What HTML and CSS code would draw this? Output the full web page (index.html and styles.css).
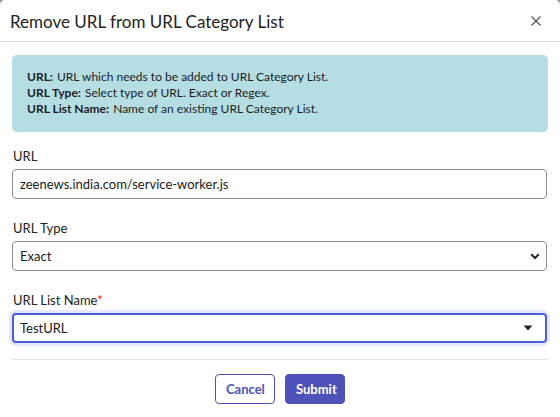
FILE: index.html
```html
<!DOCTYPE html>
<html lang="en">
<head>
<meta charset="utf-8">
<title>Remove URL from URL Category List</title>
<link rel="stylesheet" href="styles.css">
</head>
<body>
<div class="modal">
  <div class="modal-header">
    <h2 class="modal-title">Remove URL from URL Category List</h2>
    <button class="close" type="button" aria-label="Close">
      <svg width="12" height="12" viewBox="0 0 12 12"><path d="M1.5 1.5 L10.5 10.5 M10.5 1.5 L1.5 10.5" stroke="#555" stroke-width="1.3" fill="none"/></svg>
    </button>
  </div>
  <div class="modal-body">
    <div class="info">
      <div><b>URL:</b> URL which needs to be added to URL Category List.</div>
      <div><b>URL Type:</b> Select type of URL. Exact or Regex.</div>
      <div><b>URL List Name:</b> Name of an existing URL Category List.</div>
    </div>
    <div class="field">
      <label class="label">URL</label>
      <input class="control" type="text" value="zeenews.india.com/service-worker.js">
    </div>
    <div class="field">
      <label class="label">URL Type</label>
      <div class="control select">
        <span>Exact</span>
        <svg width="10" height="7" viewBox="0 0 10 7"><path d="M1.2 1.3 L5 5 L8.8 1.3" stroke="#222" stroke-width="2" fill="none"/></svg>
      </div>
    </div>
    <div class="field">
      <label class="label">URL List Name<span class="req">*</span></label>
      <div class="control select focus">
        <span>TestURL</span>
        <svg width="10" height="6" viewBox="0 0 10 6"><path d="M0.5 0.5 L9.5 0.5 L5 5.5 Z" fill="#222"/></svg>
      </div>
    </div>
  </div>
  <div class="modal-footer">
    <button class="btn btn-outline" type="button">Cancel</button>
    <button class="btn btn-primary" type="button">Submit</button>
  </div>
</div>
</body>
</html>
```
FILE: styles.css
```css
html, body {
  margin: 0;
  padding: 0;
  background: #9a9a9a;
}
body {
  font-family: Lato, "Open Sans", sans-serif;
  color: #222;
  width: 560px;
  height: 417px;
  overflow: hidden;
}
.modal {
  background: #fff;
  width: 560px;
  height: 420px;
  border-radius: 5px 5px 0 0;
  box-sizing: border-box;
}
.modal-header {
  display: flex;
  align-items: center;
  justify-content: space-between;
  height: 41px;
  padding: 0 18px 0 10px;
  border-bottom: 1px solid #dcdcdc;
}
.modal-title {
  margin: 0;
  font-size: 17px;
  font-weight: 400;
  color: #222;
  padding-top: 1px;
}
.close {
  background: none;
  border: 0;
  padding: 0;
  display: flex;
  cursor: pointer;
}
.modal-body {
  padding-top: 13px;
  height: 304px;
  border-bottom: 1px solid #e2e2e2;
  margin: 0 12px;
}
.info {
  background: #b5dde4;
  border-radius: 5px;
  padding: 14px 15px 15px 15px;
  font-size: 12px;
  line-height: 16px;
  color: #1c1c1c;
}
.info b {
  font-weight: 700;
  margin-right: 1px;
}
.field {
  margin-top: 16px;
}
.field + .field {
  margin-top: 21px;
}
.label {
  display: block;
  font-size: 13px;
  line-height: 17px;
  color: #222;
  margin-bottom: 4px;
  padding-left: 1px;
}
.req {
  color: #e02020;
}
.control {
  box-sizing: border-box;
  width: 535px;
  height: 30px;
  border: 1px solid #8f8f8f;
  border-radius: 4px;
  font-family: inherit;
  font-size: 13px;
  color: #1a1a1a;
  padding: 0 7px;
  background: #fff;
  display: block;
  outline: none;
}
.select {
  display: flex;
  align-items: center;
  justify-content: space-between;
  padding: 0 6px 0 7px;
}
.select.focus {
  border: 2px solid #4a5fe0;
  box-shadow: 0 0 0 3px #e6e9fb;
  padding: 0 12px 0 6px;
}
.modal-footer {
  display: flex;
  justify-content: center;
  gap: 10px;
  padding-top: 14px;
}
.btn {
  font-family: inherit;
  font-size: 13px;
  font-weight: 700;
  height: 30px;
  border-radius: 4px;
  padding: 0 10px;
  cursor: pointer;
}
.btn-outline {
  background: #fff;
  color: #4e52b8;
  border: 1px solid #4e52b8;
  width: 60px;
}
.btn-primary {
  background: #4e52b8;
  color: #fff;
  border: 1px solid #4e52b8;
  width: 60px;
}
```
